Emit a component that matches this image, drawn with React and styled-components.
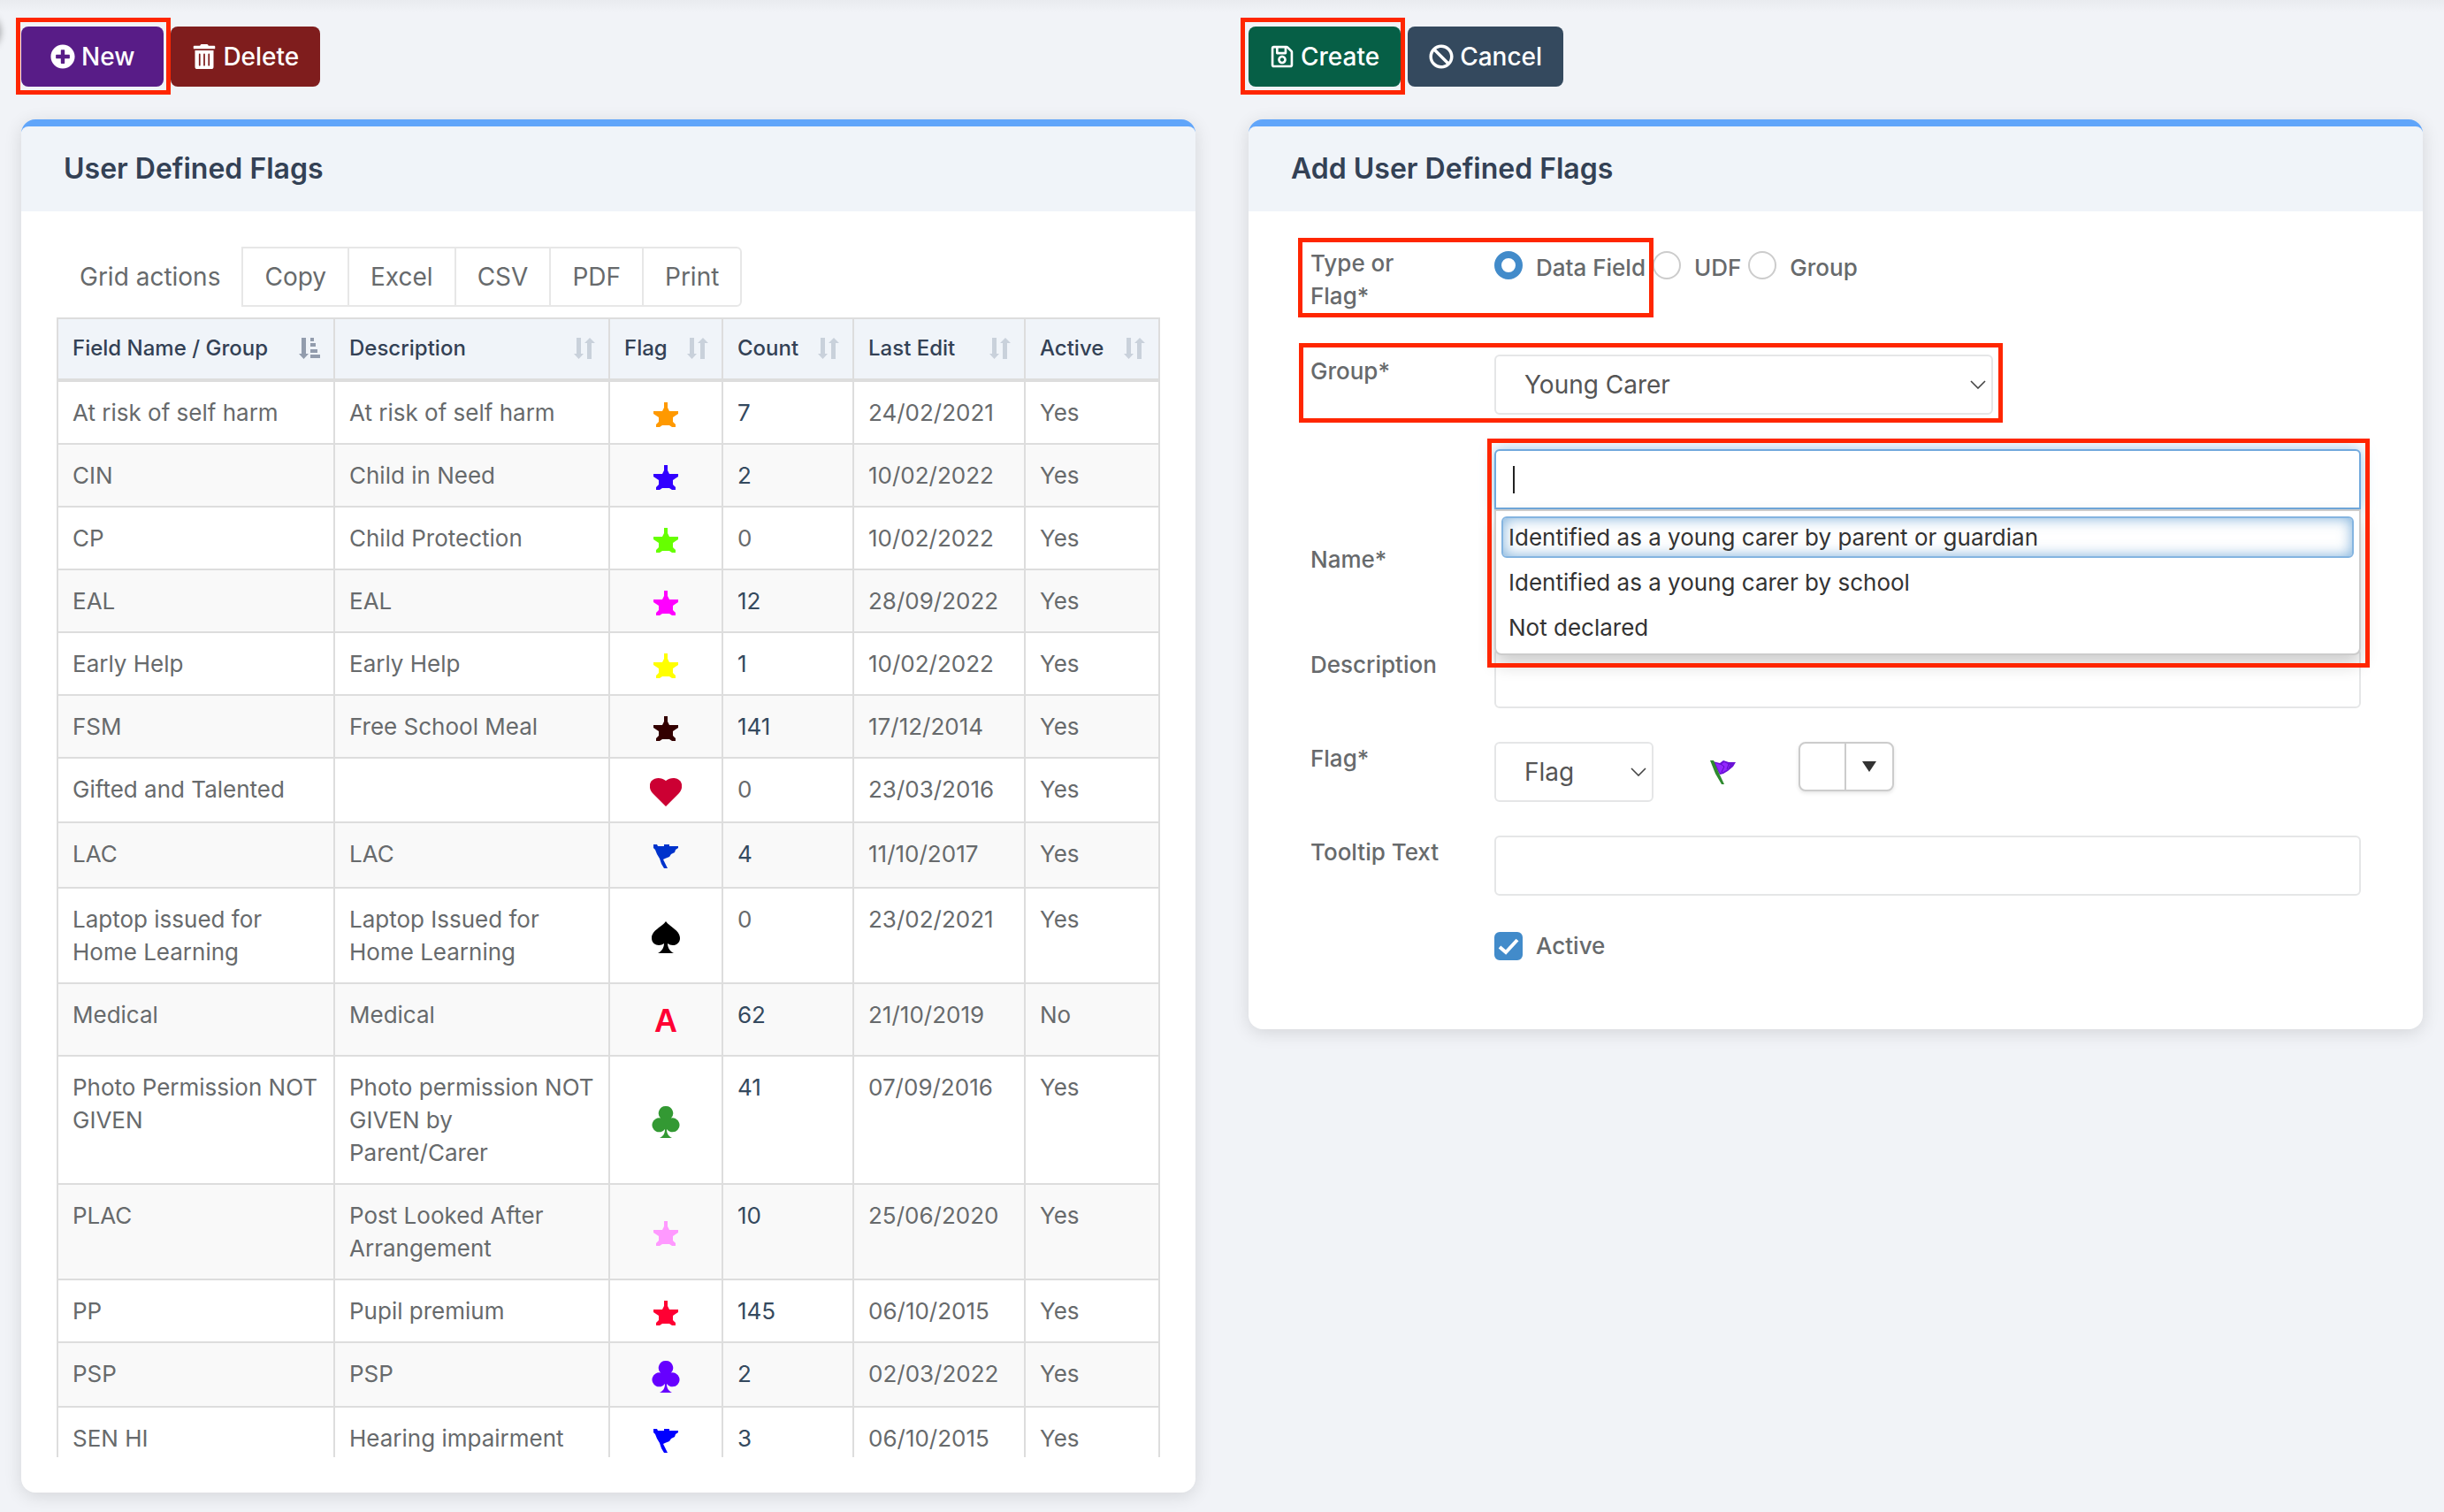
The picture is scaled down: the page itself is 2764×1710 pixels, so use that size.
import { useState } from 'react'
import styled, { createGlobalStyle, css } from 'styled-components'
import { FaPlusCircle, FaTrashAlt, FaRegSave, FaBan } from 'react-icons/fa'

const flags = [
	{ name: 'At risk of self harm', description: 'At risk of self harm', icon: 'star', color: '#ff9900', count: 7, edited: '24/02/2021', active: 'Yes' },
	{ name: 'CIN', description: 'Child in Need', icon: 'star', color: '#3300ff', count: 2, edited: '10/02/2022', active: 'Yes' },
	{ name: 'CP', description: 'Child Protection', icon: 'star', color: '#66ff00', count: 0, edited: '10/02/2022', active: 'Yes' },
	{ name: 'EAL', description: 'EAL', icon: 'star', color: '#ff00ff', count: 12, edited: '28/09/2022', active: 'Yes' },
	{ name: 'Early Help', description: 'Early Help', icon: 'star', color: '#ffff00', count: 1, edited: '10/02/2022', active: 'Yes' },
	{ name: 'FSM', description: 'Free School Meal', icon: 'star', color: '#330000', count: 141, edited: '17/12/2014', active: 'Yes' },
	{ name: 'Gifted and Talented', description: '', icon: 'heart', color: '#cc0033', count: 0, edited: '23/03/2016', active: 'Yes' },
	{ name: 'LAC', description: 'LAC', icon: 'flag', color: '#0033cc', count: 4, edited: '11/10/2017', active: 'Yes' },
	{ name: 'Laptop issued for Home Learning', description: 'Laptop Issued for Home Learning', icon: 'spade', color: '#000000', count: 0, edited: '23/02/2021', active: 'Yes' },
	{ name: 'Medical', description: 'Medical', icon: 'letter', color: '#ff0033', count: 62, edited: '21/10/2019', active: 'No' },
	{ name: 'Photo Permission NOT GIVEN', description: 'Photo permission NOT GIVEN by Parent/Carer', icon: 'club', color: '#339933', count: 41, edited: '07/09/2016', active: 'Yes' },
	{ name: 'PLAC', description: 'Post Looked After Arrangement', icon: 'star', color: '#ff99ff', count: 10, edited: '25/06/2020', active: 'Yes' },
	{ name: 'PP', description: 'Pupil premium', icon: 'star', color: '#ff0033', count: 145, edited: '06/10/2015', active: 'Yes' },
	{ name: 'PSP', description: 'PSP', icon: 'club', color: '#6600ff', count: 2, edited: '02/03/2022', active: 'Yes' },
	{ name: 'SEN HI', description: 'Hearing impairment', icon: 'flag', color: '#0000ff', count: 3, edited: '06/10/2015', active: 'Yes' },
]

const columns = [
	{ label: 'Field Name / Group', width: 313, sorted: true },
	{ label: 'Description', width: 311 },
	{ label: 'Flag', width: 128 },
	{ label: 'Count', width: 148 },
	{ label: 'Last Edit', width: 194 },
	{ label: 'Active', width: 152 },
]

const names = [
	'Identified as a young carer by parent or guardian',
	'Identified as a young carer by school',
	'Not declared',
]

const shapes = {
	star: { size: 28, box: 37, path: 'M12 0h4v6l2 4h10v3l-6 4v5l3 3v3h-4l-3-2h-8l-3 2H3v-3l3-3v-5l-6-4v-3h10l2-4z' },
	flag: { size: 28, box: 40, path: 'M0 0h4l1 2h7V0h6v2h10v2l-3 2-1 3-4 2-2 3-5 2-2 1 2 4 3 6h-4l-3-5-2-6-3-5-2-5-2-2z' },
	heart: { size: 36, box: 39, path: 'M18 34 3 19C-1 15-1 8 2 5c4-4 11-4 16 0 5-4 12-4 16 0 3 3 3 10-1 14z' },
	spade: { size: 36, box: 39, path: 'M18 0c4 6 16 10 16 19 0 8-9 10-14 6 0 5 3 9 7 11H9c4-2 7-6 7-11-5 4-14 2-14-6C2 10 14 6 18 0z' },
	club: { size: 36, box: 39, path: 'M18 0a8 8 0 0 1 6 13.500a8 8 0 1 1-5 12.500c0 5 2 8 6 10H11c4-2 6-5 6-10a8 8 0 1 1-5-12.500A8 8 0 0 1 18 0z' },
}

function FlagIcon({ icon, color }) {
	if (icon === 'letter') return <LetterFlag $color={color}>A</LetterFlag>
	const { size, box, path } = shapes[icon]
	return (
		<IconBox $height={box}>
			<svg width={size} height={size} viewBox={`0 0 ${size} ${size}`} fill={color} aria-hidden='true'>
				<path d={path} />
			</svg>
		</IconBox>
	)
}

function SortIcon({ sorted }) {
	return (
		<SortSvg viewBox='0 0 24 24' aria-hidden='true' $sorted={sorted}>
			<path d='M3 0h5v18h3L5.500 24 0 18h3z' />
			{sorted ? (
				<path d='M13 0h4v4h-4zM13 6h6v4h-6zM13 13h8v4h-8zM13 19h11v4H13z' />
			) : (
				<path d='M15 24h5V6h4L18 0l-6 6h3z' />
			)}
		</SortSvg>
	)
}

function SelectBox({ id, label, width, options }) {
	return (
		<SelectWrapper $width={width}>
			<select id={id} aria-label={label}>
				{options.map(option => <option key={option}>{option}</option>)}
			</select>
			<svg viewBox='0 0 18 10' aria-hidden='true'>
				<path d='M1 1l8 8 8-8' fill='none' stroke='#444' strokeWidth='1.6' />
			</svg>
		</SelectWrapper>
	)
}

function FlagsGrid() {
	return (
		<Card>
			<CardTitle>User Defined Flags</CardTitle>
			<GridBody>
				<GridActions>
					<span>Grid actions</span>
					{['Copy', 'Excel', 'CSV', 'PDF', 'Print'].map(action => (
						<button type='button' key={action}>{action}</button>
					))}
				</GridActions>
				<TableScroll>
					<Table>
						<colgroup>
							{columns.map(column => <Col key={column.label} $width={column.width} />)}
						</colgroup>
						<thead>
							<tr>
								{columns.map(column => (
									<th key={column.label} scope='col'>
										<HeadCell>
											{column.label}
											<SortIcon sorted={column.sorted} />
										</HeadCell>
									</th>
								))}
							</tr>
						</thead>
						<tbody>
							{flags.map(flag => (
								<tr key={flag.name}>
									<td>{flag.name}</td>
									<td>{flag.description}</td>
									<FlagCell><FlagIcon icon={flag.icon} color={flag.color} /></FlagCell>
									<td>{flag.count > 0 ? <a href='#count'>{flag.count}</a> : flag.count}</td>
									<td>{flag.edited}</td>
									<td>{flag.active}</td>
								</tr>
							))}
						</tbody>
					</Table>
				</TableScroll>
			</GridBody>
		</Card>
	)
}

function FlagForm() {
	const [type, setType] = useState('Data Field')
	const [active, setActive] = useState(true)

	return (
		<Card>
			<CardTitle>Add User Defined Flags</CardTitle>
			<FormBody>
				<FormRow $height={84} role='radiogroup' aria-labelledby='type-label'>
					<Label as='span' id='type-label'>Type or<br />Flag*</Label>
					<Radios>
						{['Data Field', 'UDF', 'Group'].map(option => (
							<Choice key={option} $align='flex-start'>
								<Radio name='type' checked={type === option} onChange={() => setType(option)} />
								{option}
							</Choice>
						))}
					</Radios>
					<Outline $inset='-10px 800px 4px -14px' />
				</FormRow>
				<FormRow $height={69}>
					<Label htmlFor='group'>Group*</Label>
					<SelectBox id='group' width={564} options={['Young Carer']} />
					<Outline $inset='-13px 405px -8px -13px' />
				</FormRow>
				<FormRow $height={187}>
					<Label htmlFor='name' $top={106}>Name*</Label>
					<Combo>
						<Input id='name' type='text' autoComplete='off' $focused />
						<Caret />
						<Menu role='listbox' aria-label='Name'>
							{names.map((name, i) => (
								<MenuItem key={name} role='option' aria-selected={i === 0} $selected={i === 0}>{name}</MenuItem>
							))}
						</Menu>
						<Outline $inset='-12px -10px -179px -8px' />
					</Combo>
				</FormRow>
				<FormRow>
					<Label htmlFor='description'>Description</Label>
					<Input id='description' type='text' />
				</FormRow>
				<FormRow>
					<Label htmlFor='flag'>Flag*</Label>
					<FlagPicker>
						<SelectBox id='flag' width={180} options={['Flag']} />
						<svg width='30' height='30' viewBox='0 0 30 30' aria-hidden='true'>
							<path d='M3 2l8 2 4-3 6 2 8 0-3 5-6 5-5 3-4 1z' fill='#6a12d6' />
							<path d='M6 4l6 2 4-3 6 3-2 5-5 3-4 1z' fill='#9326ff' />
							<path d='M12 5l4 3-3 6M21 5l-2 6' fill='none' stroke='#5a0cc0' />
							<path d='M0 1h4l5 12 7 15h-3L6 16z' fill='#2f8a2f' />
						</svg>
						<ColorButton type='button' aria-label='Colour'>
							<span />
							<svg width='16' height='12' viewBox='0 0 16 12' aria-hidden='true'><path d='M0 0h16L8 12z' fill='#333' /></svg>
						</ColorButton>
					</FlagPicker>
				</FormRow>
				<FormRow>
					<Label htmlFor='tooltip'>Tooltip Text</Label>
					<Input id='tooltip' type='text' />
				</FormRow>
				<FormRow $height={38}>
					<span />
					<Choice>
						<Checkbox>
							<input type='checkbox' checked={active} onChange={e => setActive(e.target.checked)} />
							<svg viewBox='0 0 32 32' aria-hidden='true'>
								<path d='M6 17l7 6L26 9' fill='none' stroke='#fff' strokeWidth='4' />
							</svg>
						</Checkbox>
						Active
					</Choice>
				</FormRow>
			</FormBody>
		</Card>
	)
}

export default function App() {
	return (
		<>
			<GlobalStyle />
			<Page>
				<SideToggle aria-hidden='true' />
				<Column>
					<Toolbar>
						<Marked>
							<ToolButton type='button' $color='#581c87' $wide><FaPlusCircle />New</ToolButton>
							<Outline $inset='-10px -8px -9px -6px' />
						</Marked>
						<ToolButton type='button' $color='#7f1d1d'><FaTrashAlt />Delete</ToolButton>
					</Toolbar>
					<FlagsGrid />
				</Column>
				<Column>
					<Toolbar>
						<Marked>
							<ToolButton type='button' $color='#065f46'><FaRegSave />Create</ToolButton>
							<Outline $inset='-10px -5px -9px -9px' />
						</Marked>
						<ToolButton type='button' $color='#34495e'><FaBan />Cancel</ToolButton>
					</Toolbar>
					<FlagForm />
				</Column>
			</Page>
		</>
	)
}

const GlobalStyle = createGlobalStyle`
	* {
		box-sizing: border-box;
	}

	body {
		margin: 0;
		background-color: #f1f3f7;
		color: #676a6c;
		font-family: Inter, 'Liberation Sans', sans-serif;
		font-size: 26px;
		line-height: 37px;
	}

	button, input, select {
		font: inherit;
		color: inherit;
	}
`

const Page = styled.main`
	position: relative;
	display: grid;
	grid-template-columns: 1fr 1fr;
	align-items: start;
	gap: 60px;
	min-height: 100vh;
	padding: 30px 24px 22px;
	overflow: hidden;
	background: linear-gradient(#e9ebef, #f1f3f7 14px);
`

const SideToggle = styled.span`
	position: absolute;
	top: 16px;
	left: -40px;
	width: 40px;
	height: 40px;
	border-radius: 50%;
	box-shadow: 0 0 8px rgba(0, 0, 0, 0.4);
`

const Column = styled.section`
	min-width: 0;
`

const Toolbar = styled.div`
	display: flex;
	gap: 8px;
	margin-bottom: 37px;
`

const Marked = styled.div`
	position: relative;
`

/* red callout box drawn round a control */
const Outline = styled.span`
	position: absolute;
	inset: ${({ $inset }) => $inset};
	z-index: 3;
	border: 5px solid #ff2600;
	pointer-events: none;
`

const ToolButton = styled.button`
	display: flex;
	align-items: center;
	gap: 7px;
	height: 68px;
	padding: 0 ${({ $wide }) => ($wide ? 33 : 24)}px;
	border: 0;
	border-radius: 8px;
	background-color: ${({ $color }) => $color};
	color: #fff;
	font-size: 28px;
	font-weight: 500;

	svg {
		height: 28px;
	}
`

const Card = styled.div`
	border-top: 8px solid #60a5fa;
	border-radius: 16px;
	background-color: #fff;
	box-shadow: 0 4px 20px rgba(0, 0, 0, 0.12);
`

const CardTitle = styled.h2`
	margin: 0;
	padding: 28px 48px;
	border-radius: 8px 8px 0 0;
	background-color: #f0f4f9;
	color: #334155;
	font-size: 32px;
	font-weight: 600;
	line-height: 40px;
`

const GridBody = styled.div`
	padding: 40px;
`

const GridActions = styled.div`
	display: flex;
	align-items: center;
	margin-bottom: 12px;
	font-size: 28px;

	span {
		padding: 0 24px 0 26px;
	}

	button {
		height: 68px;
		padding: 0 24px;
		border: 2px solid #e7e7e7;
		background-color: #fff;

		& + button {
			margin-left: -2px;
		}

		&:last-child {
			border-radius: 0 6px 6px 0;
		}
	}
`

const TableScroll = styled.div`
	max-height: calc(100vh - 421px);
	overflow: hidden;
`

const Table = styled.table`
	width: 100%;
	table-layout: fixed;
	border-collapse: separate;
	border-spacing: 0;
	border: solid #ddd;
	border-width: 2px 0 0 2px;

	th, td {
		padding: 16px;
		border: solid #ddd;
		border-width: 0 2px 2px 0;
		text-align: left;
		vertical-align: top;
	}

	th {
		padding: 14px 15px 16px 16px;
		border-bottom-width: 4px;
		background-color: #f0f4f9;
		color: #334155;
		font-size: 24px;
		font-weight: 500;
	}

	tbody tr:nth-child(even) {
		background-color: #f9f9f9;
	}

	a {
		color: #34495e;
		text-decoration: none;
	}
`

const Col = styled.col`
	width: ${({ $width }) => $width}px;
`

const HeadCell = styled.div`
	display: flex;
	align-items: center;
	justify-content: space-between;
	white-space: nowrap;
`

const SortSvg = styled.svg`
	width: 24px;
	height: 24px;
	flex: none;
	fill: ${({ $sorted }) => ($sorted ? '#929cad' : '#c9d1db')};
`

const FlagCell = styled.td`
	&& {
		padding: 18px 16px 14px;
		text-align: center;
		vertical-align: middle;
	}
`

const IconBox = styled.span`
	display: flex;
	align-items: center;
	justify-content: center;
	height: ${({ $height }) => $height}px;
`

const LetterFlag = styled.span`
	display: block;
	color: ${({ $color }) => $color};
	font-family: 'Liberation Sans', Arial, sans-serif;
	font-size: 36px;
	font-weight: 700;
	line-height: 48px;
`

const FormBody = styled.form`
	display: flex;
	flex-direction: column;
	gap: 38px;
	padding: 40px 70px 75px;
	font-weight: 500;
`

const FormRow = styled.div`
	position: relative;
	display: grid;
	grid-template-columns: 208px 1fr;
	align-items: start;
	min-height: ${({ $height = 68 }) => $height}px;
`

const Label = styled.label`
	padding-top: ${({ $top = 0 }) => $top}px;
`

const Radios = styled.div`
	display: flex;
	gap: 8px;
	padding-top: 5px;
`

const Choice = styled.label`
	display: flex;
	align-items: ${({ $align = 'center' }) => $align};
	gap: 15px;
`

const Radio = styled.input.attrs({ type: 'radio' })`
	appearance: none;
	width: 32px;
	height: 32px;
	margin: 0;
	border: 2px solid #ccc;
	border-radius: 50%;
	background-color: #fff;

	&:checked {
		border: 8px solid #428bca;
	}
`

const Checkbox = styled.span`
	display: grid;
	width: 32px;
	height: 32px;

	input, svg {
		grid-area: 1 / 1;
		width: 32px;
		height: 32px;
		margin: 0;
		pointer-events: none;
	}

	input {
		appearance: none;
		border: 2px solid #ccc;
		border-radius: 6px;
		pointer-events: auto;
	}

	input:checked {
		border-color: #428bca;
		background-color: #428bca;
	}
`

const Input = styled.input`
	width: 100%;
	height: 68px;
	padding: 12px 20px;
	border: 2px solid #e5e6e7;
	border-radius: 6px;
	outline: 0;
	background-color: #fff;

	${({ $focused }) => $focused && css`
		position: relative;
		border-color: #71a9dd;
		border-radius: 6px 6px 0 0;
		box-shadow: 0 0 16px rgba(82, 158, 214, 0.6);
		caret-color: transparent;
	`}
`

const SelectWrapper = styled.div`
	position: relative;
	width: 100%;
	max-width: ${({ $width }) => $width}px;

	select {
		appearance: none;
		display: block;
		width: 100%;
		height: 68px;
		padding: 0 32px;
		border: 2px solid #e5e6e7;
		border-radius: 6px;
		background-color: #fff;
		color: #555;
		font-size: 28px;
		font-weight: 400;
	}

	svg {
		position: absolute;
		top: 29px;
		right: 8px;
		width: 18px;
		height: 10px;
		pointer-events: none;
	}
`

const Combo = styled.div`
	position: relative;
	z-index: 2;
`

const Caret = styled.span`
	position: absolute;
	top: 19px;
	left: 21px;
	width: 2px;
	height: 31px;
	background-color: #222;
`

const Menu = styled.ul`
	position: absolute;
	top: 68px;
	left: 0;
	right: 0;
	display: flex;
	flex-direction: column;
	gap: 4px;
	margin: 0;
	padding: 6px;
	border: 2px solid #ccc;
	border-radius: 0 0 8px 8px;
	background-color: #fff;
	box-shadow: 0 10px 20px rgba(0, 0, 0, 0.2);
	list-style: none;
`

const MenuItem = styled.li`
	padding: 3px 6px;
	border: 2px solid transparent;
	border-radius: 6px;
	color: #333;
	font-weight: 400;

	${({ $selected }) => $selected && css`
		border-color: #84b4e0;
		box-shadow: inset 0 0 16px rgba(66, 139, 202, 0.7);
	`}
`

const FlagPicker = styled.div`
	display: grid;
	grid-template-columns: 180px 36px 108px;
	column-gap: 64px;
	align-items: start;

	& > svg {
		margin-top: 20px;
	}
`

const ColorButton = styled.button`
	display: grid;
	grid-template-columns: 52px 1fr;
	align-items: center;
	justify-items: center;
	height: 56px;
	padding: 0;
	border: 2px solid #ccc;
	border-radius: 8px;
	background-color: #fff;
	box-shadow: 0 2px 4px rgba(0, 0, 0, 0.1);

	span {
		width: 100%;
		height: 100%;
		border-right: 2px solid #ccc;
	}
`
